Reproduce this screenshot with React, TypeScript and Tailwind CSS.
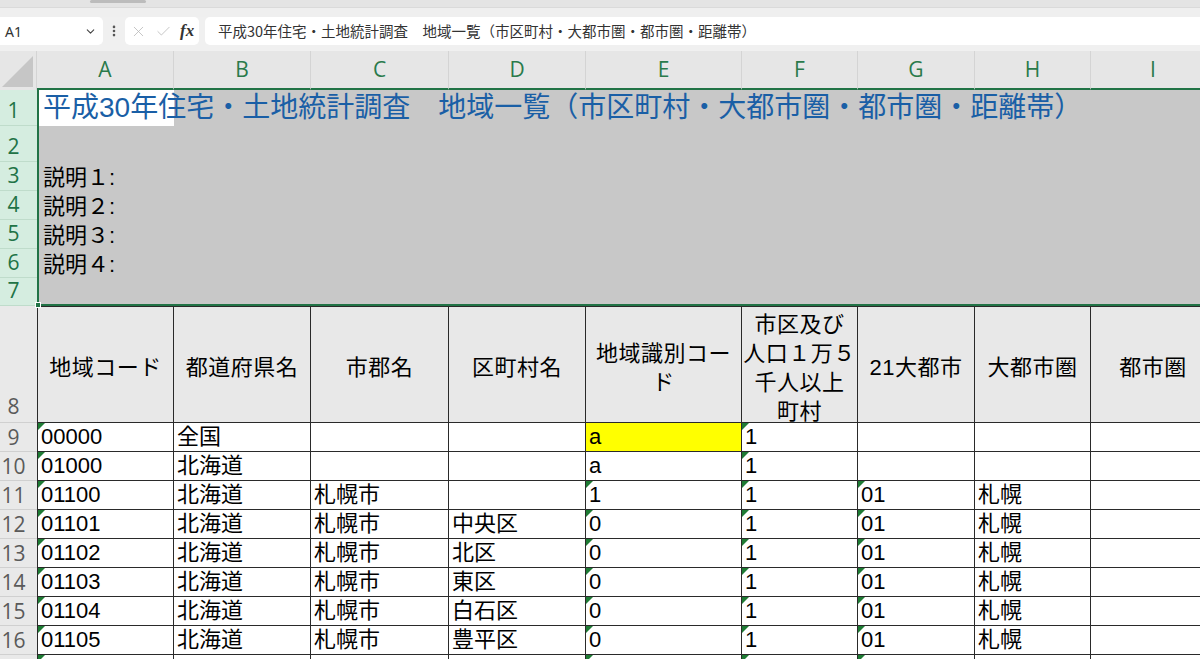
import React from "react";
import { ChevronDown, X, Check, EllipsisVertical } from "lucide-react";

const cols = [
  { w: "w-[137px]", l: "A" },
  { w: "w-[137px]", l: "B" },
  { w: "w-[138px]", l: "C" },
  { w: "w-[137px]", l: "D" },
  { w: "w-[156px]", l: "E" },
  { w: "w-[116px]", l: "F" },
  { w: "w-[117px]", l: "G" },
  { w: "w-[116px]", l: "H" },
  { w: "w-[125px]", l: "I" },
];

const headers: React.ReactNode[] = [
  "地域コード",
  "都道府県名",
  "市郡名",
  "区町村名",
  <>
    地域識別コー
    <br />ド
  </>,
  <>
    市区及び
    <br />
    人口１万５
    <br />
    千人以上
    <br />
    町村
  </>,
  "21大都市",
  "大都市圏",
  "都市圏",
];

type Row = { n: number; label: string; c: string[]; tri: number[]; yellow?: number };

const rows: Row[] = [
  { n: 9, label: "9", c: ["00000", "全国", "", "", "a", "1", "", "", ""], tri: [0, 5], yellow: 4 },
  { n: 10, label: "10", c: ["01000", "北海道", "", "", "a", "1", "", "", ""], tri: [0, 5] },
  { n: 11, label: "11", c: ["01100", "北海道", "札幌市", "", "1", "1", "01", "札幌", ""], tri: [0, 4, 5, 6] },
  { n: 12, label: "12", c: ["01101", "北海道", "札幌市", "中央区", "0", "1", "01", "札幌", ""], tri: [0, 4, 5, 6] },
  { n: 13, label: "13", c: ["01102", "北海道", "札幌市", "北区", "0", "1", "01", "札幌", ""], tri: [0, 4, 5, 6] },
  { n: 14, label: "14", c: ["01103", "北海道", "札幌市", "東区", "0", "1", "01", "札幌", ""], tri: [0, 4, 5, 6] },
  { n: 15, label: "15", c: ["01104", "北海道", "札幌市", "白石区", "0", "1", "01", "札幌", ""], tri: [0, 4, 5, 6] },
  { n: 16, label: "16", c: ["01105", "北海道", "札幌市", "豊平区", "0", "1", "01", "札幌", ""], tri: [0, 4, 5, 6] },
  { n: 17, label: "", c: ["", "", "", "", "", "", "", "", ""], tri: [0, 4, 5, 6] },
];

const topRows = [
  { n: 1, h: "h-[36px]" },
  { n: 2, h: "h-[36px]" },
  { n: 3, h: "h-[29px]" },
  { n: 4, h: "h-[29px]" },
  { n: 5, h: "h-[29px]" },
  { n: 6, h: "h-[29px]" },
  { n: 7, h: "h-[28px]" },
];

const TITLE = "平成30年住宅・土地統計調査　地域一覧（市区町村・大都市圏・都市圏・距離帯）";

function Tri() {
  return (
    <span className="absolute left-0 top-0 h-0 w-0 border-t-[7px] border-r-[7px] border-t-[#1e7b34] border-r-transparent" />
  );
}

export default function App() {
  return (
    <div className="h-[659px] w-[1200px] overflow-hidden bg-[#f0f0f0] font-['Liberation_Sans','Noto_Sans_CJK_JP',sans-serif] text-black">
      {/* top strip */}
      <div className="h-[17px] bg-[#efefef]">
        <div className="h-[8px] bg-[#e4e4e4] border-b border-[#dadada]">
          <div className="ml-[90px] h-[3px] w-[56px] rounded-full bg-[#bcbcbc]" />
        </div>
      </div>

      {/* formula bar */}
      <div className="flex h-[28px] items-stretch">
        <div className="flex w-[103px] items-center justify-between rounded-r-[5px] bg-white pl-[5px] pr-[6px]">
          <span className="font-['Noto_Sans',sans-serif] text-[14px] text-[#333]">A1</span>
          <ChevronDown size={13} strokeWidth={2} className="text-[#444]" />
        </div>
        <div className="flex w-[22px] items-center justify-center">
          <EllipsisVertical size={14} strokeWidth={2.5} className="text-[#555]" />
        </div>
        <div className="flex w-[74px] items-center gap-[8px] rounded-[5px] bg-white pl-[5px]">
          <X size={17} strokeWidth={1.1} className="text-[#b5b5b5]" />
          <Check size={17} strokeWidth={1.1} className="text-[#b5b5b5]" />
          <span className="font-['Liberation_Serif',serif] text-[17px] font-bold italic text-[#333]">fx</span>
        </div>
        <div className="ml-[6px] flex flex-1 items-center rounded-l-[5px] bg-white pl-[13px]">
          <span className="whitespace-nowrap font-['Noto_Sans_CJK_JP',sans-serif] text-[14.5px] text-[#333]">
            {TITLE}
          </span>
        </div>
      </div>
      <div className="h-[6px]" />

      {/* column headers */}
      <div className="flex h-[39px] bg-[#e6e6e6]">
        <div className="flex w-[37px] shrink-0 items-end justify-end border-r border-[#d4d4d4] pb-[3px] pr-[3px]">
          <svg width="31" height="31" viewBox="0 0 31 31">
            <polygon points="31,0 31,31 0,31" fill="#c6c6c6" />
          </svg>
        </div>
        {cols.map((c) => (
          <div
            key={c.l}
            className={`${c.w} flex shrink-0 items-center justify-center border-b-2 border-r border-b-[#217346] border-r-[#d4d4d4] pt-[1px] font-['Open_Sans',sans-serif] text-[21px] text-[#2a7a4b]`}
          >
            {c.l}
          </div>
        ))}
      </div>

      {/* merged rows 1-7 */}
      <div className="flex">
        <div className="flex w-[37px] shrink-0 flex-col bg-[#d5ede0]">
          {topRows.map((r) => (
            <div
              key={r.n}
              className={`${r.h} flex items-end justify-center border-b border-[#bfdccb] pb-[1px] pr-[10px] font-['Open_Sans',sans-serif] text-[21px] leading-[28px] text-[#217346]`}
            >
              {r.n}
            </div>
          ))}
        </div>
        <div className="relative flex flex-1 flex-col border-b-2 border-l-2 border-[#217346] bg-[#c8c8c8]">
          <div className="relative flex h-[36px] items-center">
            <div className="absolute left-0 top-0 h-full w-[135px] bg-white" />
            <span className="relative whitespace-nowrap pl-[4px] font-['Liberation_Sans','Noto_Sans_CJK_JP',sans-serif] text-[28px] leading-[36px] text-[#1a5fa6]">
              {TITLE}
            </span>
          </div>
          <div className="h-[36px]" />
          {["説明１:", "説明２:", "説明３:", "説明４:"].map((t) => (
            <div key={t} className="flex h-[29px] items-end pl-[4px] text-[22px] leading-[26px]">
              {t}
            </div>
          ))}
          <div className="h-[26px]" />
          <div className="absolute bottom-[-4px] left-[-4px] h-[6px] w-[6px] border border-white bg-[#217346]" />
        </div>
      </div>

      {/* header row 8 */}
      <div className="flex h-[117px]">
        <div className="flex w-[37px] shrink-0 items-end justify-center border-b border-[#d0d0d0] bg-[#e9e9e9] pb-[2px] pr-[10px] font-['Open_Sans',sans-serif] text-[21px] leading-[28px] text-[#5a5a5a]">
          8
        </div>
        {cols.map((c, i) => (
          <div
            key={c.l}
            className={`${c.w} ${i === 0 ? "border-l" : ""} flex shrink-0 items-center justify-center border-b border-r border-t border-[#2a2a2a] bg-[#e8e8e8] pt-[6px] text-center text-[22px] leading-[29px] tracking-[0.5px]`}
          >
            <div>{headers[i]}</div>
          </div>
        ))}
      </div>

      {/* data rows */}
      {rows.map((r) => (
        <div key={r.n} className="flex h-[29px]">
          <div className="flex w-[37px] shrink-0 items-end justify-center border-b border-[#d0d0d0] bg-[#e9e9e9] pr-[10px] font-['Open_Sans',sans-serif] text-[21px] leading-[28px] text-[#5a5a5a]">
            {r.label}
          </div>
          {cols.map((c, i) => (
            <div
              key={c.l}
              className={`${c.w} ${i === 0 ? "border-l" : ""} ${
                r.yellow === i ? "bg-[#ffff00]" : "bg-white"
              } relative flex shrink-0 items-end overflow-hidden whitespace-nowrap border-b border-r border-[#2a2a2a] pb-[1px] pl-[3px] text-[22px] leading-[26px]`}
            >
              {r.tri.includes(i) && <Tri />}
              {r.c[i]}
            </div>
          ))}
        </div>
      ))}
    </div>
  );
}
